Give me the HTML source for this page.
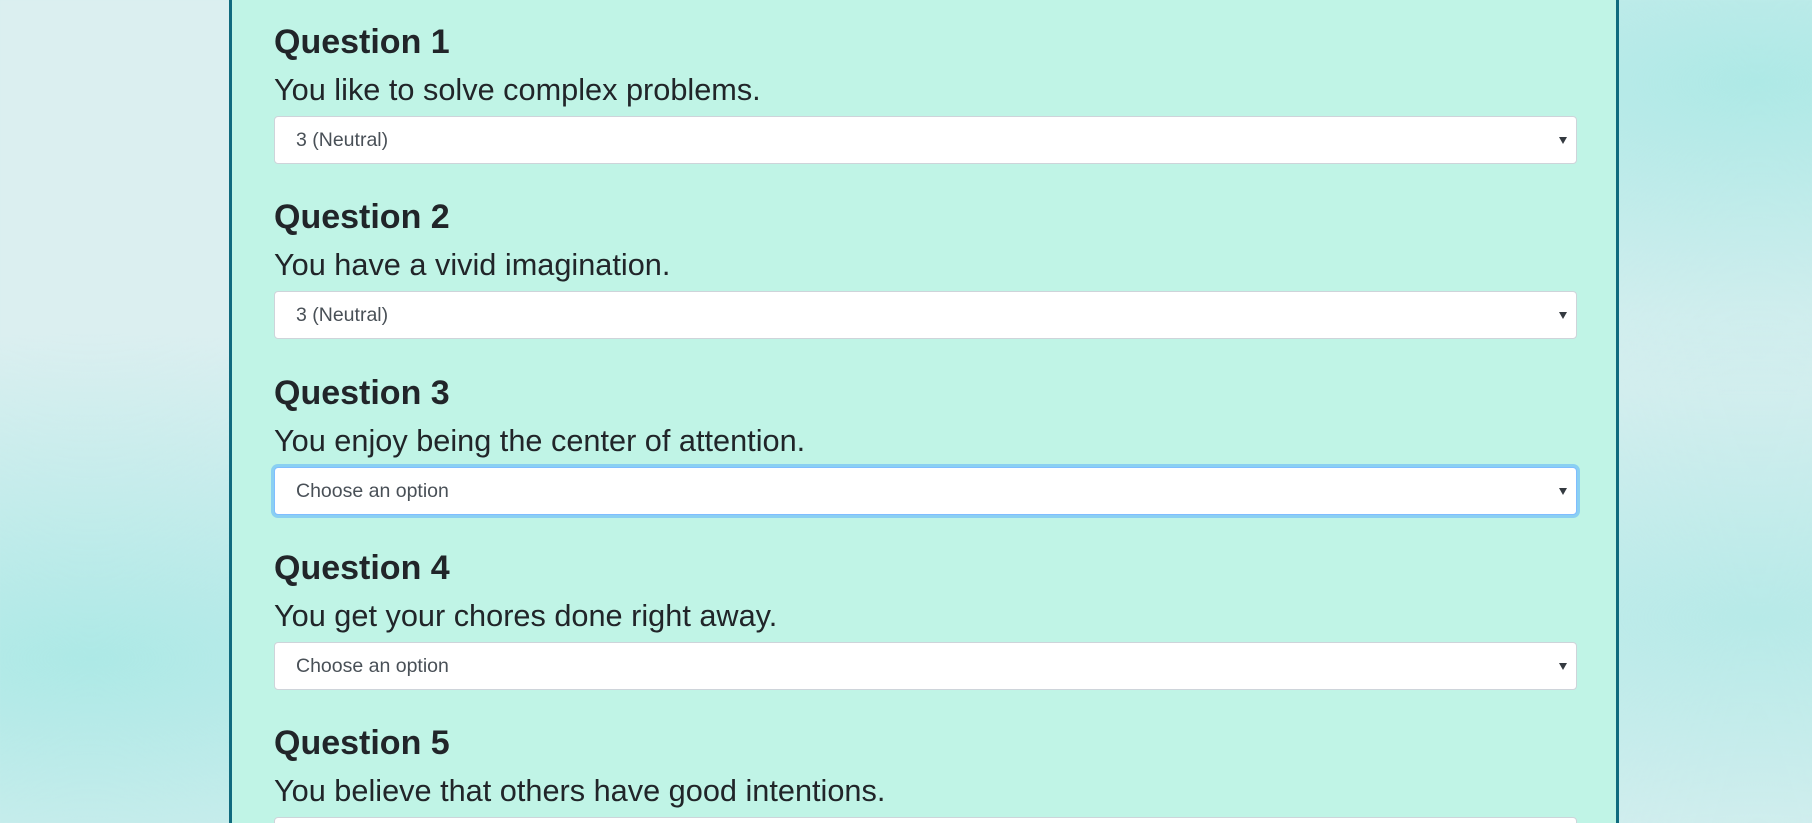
<!DOCTYPE html>
<html><head><style>
html,body{margin:0;padding:0;width:1812px;height:823px;overflow:hidden}
body{background:radial-gradient(ellipse at 5% 80%,#ade9e6 0%,transparent 35%),radial-gradient(ellipse at 97% 10%,#aee9e6 0%,transparent 30%),radial-gradient(ellipse at 97% 75%,#b7eae8 0%,transparent 35%),#dbeff0;font-family:"Liberation Sans",sans-serif;position:relative}
.panel{position:absolute;left:229px;top:0;width:1384px;height:823px;background:#c0f4e6;border-left:3px solid #0f6a7e;border-right:3px solid #0f6a7e}
.q{position:absolute;left:274px;width:1303px}
.q5{height:101px;overflow:hidden}
h2{margin:0;font-size:34px;font-weight:bold;color:#212529;line-height:40px;height:40px}
p{margin:0;font-size:30.7px;color:#212529;line-height:36px;margin-top:10px;white-space:nowrap}
.sel{margin-top:8px;height:48px;background:#fff;border:1px solid #ced4da;border-radius:4px;box-sizing:border-box;position:relative;font-size:19.5px;color:#495057;line-height:46px;padding-left:21px}
.sel:after{content:"";position:absolute;right:9px;top:20px;border-left:4px solid transparent;border-right:4px solid transparent;border-top:7px solid #343a40}
.focus{border-color:#80bdff;box-shadow:0 0 0 3px #8ad0f2}
</style></head><body>
<div class="panel"></div>
<div class="q" style="top:22px"><h2>Question 1</h2><p>You like to solve complex problems.</p><div class="sel">3 (Neutral)</div></div>
<div class="q" style="top:197px"><h2>Question 2</h2><p>You have a vivid imagination.</p><div class="sel">3 (Neutral)</div></div>
<div class="q" style="top:373px"><h2>Question 3</h2><p>You enjoy being the center of attention.</p><div class="sel focus">Choose an option</div></div>
<div class="q" style="top:548px"><h2>Question 4</h2><p>You get your chores done right away.</p><div class="sel">Choose an option</div></div>
<div class="q q5" style="top:723px"><h2>Question 5</h2><p>You believe that others have good intentions.</p><div class="sel"></div></div>
</body></html>
